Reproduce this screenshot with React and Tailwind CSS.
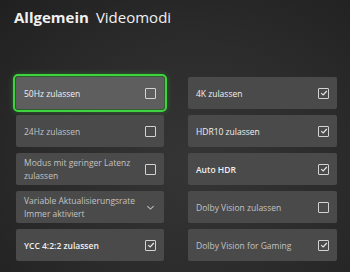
const left = [
  { label: '50Hz zulassen', type: 'box', focused: true },
  { label: '24Hz zulassen', type: 'box', dim: true },
  { label: 'Modus mit geringer Latenz', sub: 'zulassen', type: 'box', dim: true },
  { label: 'Variable Aktualisierungsrate', sub: 'Immer aktiviert', type: 'select', dim: true },
  { label: 'YCC 4:2:2 zulassen', type: 'check', bold: true },
];

const right = [
  { label: '4K zulassen', type: 'check' },
  { label: 'HDR10 zulassen', type: 'check' },
  { label: 'Auto HDR', type: 'check', bold: true },
  { label: 'Dolby Vision zulassen', type: 'box', dim: true },
  { label: 'Dolby Vision for Gaming', type: 'check', dim: true },
];

function Box({ checked }) {
  return (
    <div className="w-[11px] h-[11px] border-[1.5px] border-[#d2d2d2] rounded-[1px] flex items-center justify-center shrink-0">
      {checked && (
        <svg viewBox="0 0 10 10" className="w-[8px] h-[8px]">
          <path d="M1.5 5.2 L4 7.5 L8.5 2.5" fill="none" stroke="#e6e6e6" strokeWidth="1.5" />
        </svg>
      )}
    </div>
  );
}

function Tile({ item }) {
  const text = item.dim ? 'text-[#c2c2c2]' : 'text-[#f0f0f0] font-medium';
  return (
    <div
      className={
        'h-[32px] flex items-center justify-between pl-[8px] pr-[8px] rounded-[2px] ' +
        (item.focused
          ? 'bg-[#5e5e5e] outline-[2px] outline-solid outline-[#3fd43f] outline-offset-[1px] shadow-[0_0_6px_2px_rgba(60,220,60,0.45)]'
          : 'bg-[#4a4a4a]')
      }
    >
      <div className={'leading-[13px] text-[8.5px] ' + text + (item.bold ? ' font-semibold' : '')}>
        <div>{item.label}</div>
        {item.sub && <div>{item.sub}</div>}
      </div>
      {item.type === 'select' ? (
        <svg viewBox="0 0 10 10" className="w-[9px] h-[9px] mr-[1px]">
          <path d="M1.5 3.5 L5 6.8 L8.5 3.5" fill="none" stroke="#bdbdbd" strokeWidth="1.2" />
        </svg>
      ) : (
        <Box checked={item.type === 'check'} />
      )}
    </div>
  );
}

export default function App() {
  return (
    <div
      className="w-[350px] h-[272px] overflow-hidden bg-[radial-gradient(ellipse_at_55%_60%,#353535_0%,#2c2c2c_50%,#202020_100%)] pt-[7px] px-[16px]"
      style={{ fontFamily: '"Open Sans", "Noto Sans", sans-serif' }}
    >
      <div className="flex items-baseline gap-[7px] text-[#f0f0f0] text-[15px] leading-[20px] -ml-[2px]">
        <span className="font-bold">Allgemein</span>
        <span>Videomodi</span>
      </div>
      <div className="mt-[50px] grid grid-cols-[148px_149px] gap-x-[24px]">
        <div className="flex flex-col gap-[6px]">
          {left.map((it) => (
            <Tile key={it.label} item={it} />
          ))}
        </div>
        <div className="flex flex-col gap-[6px]">
          {right.map((it) => (
            <Tile key={it.label} item={it} />
          ))}
        </div>
      </div>
    </div>
  );
}
